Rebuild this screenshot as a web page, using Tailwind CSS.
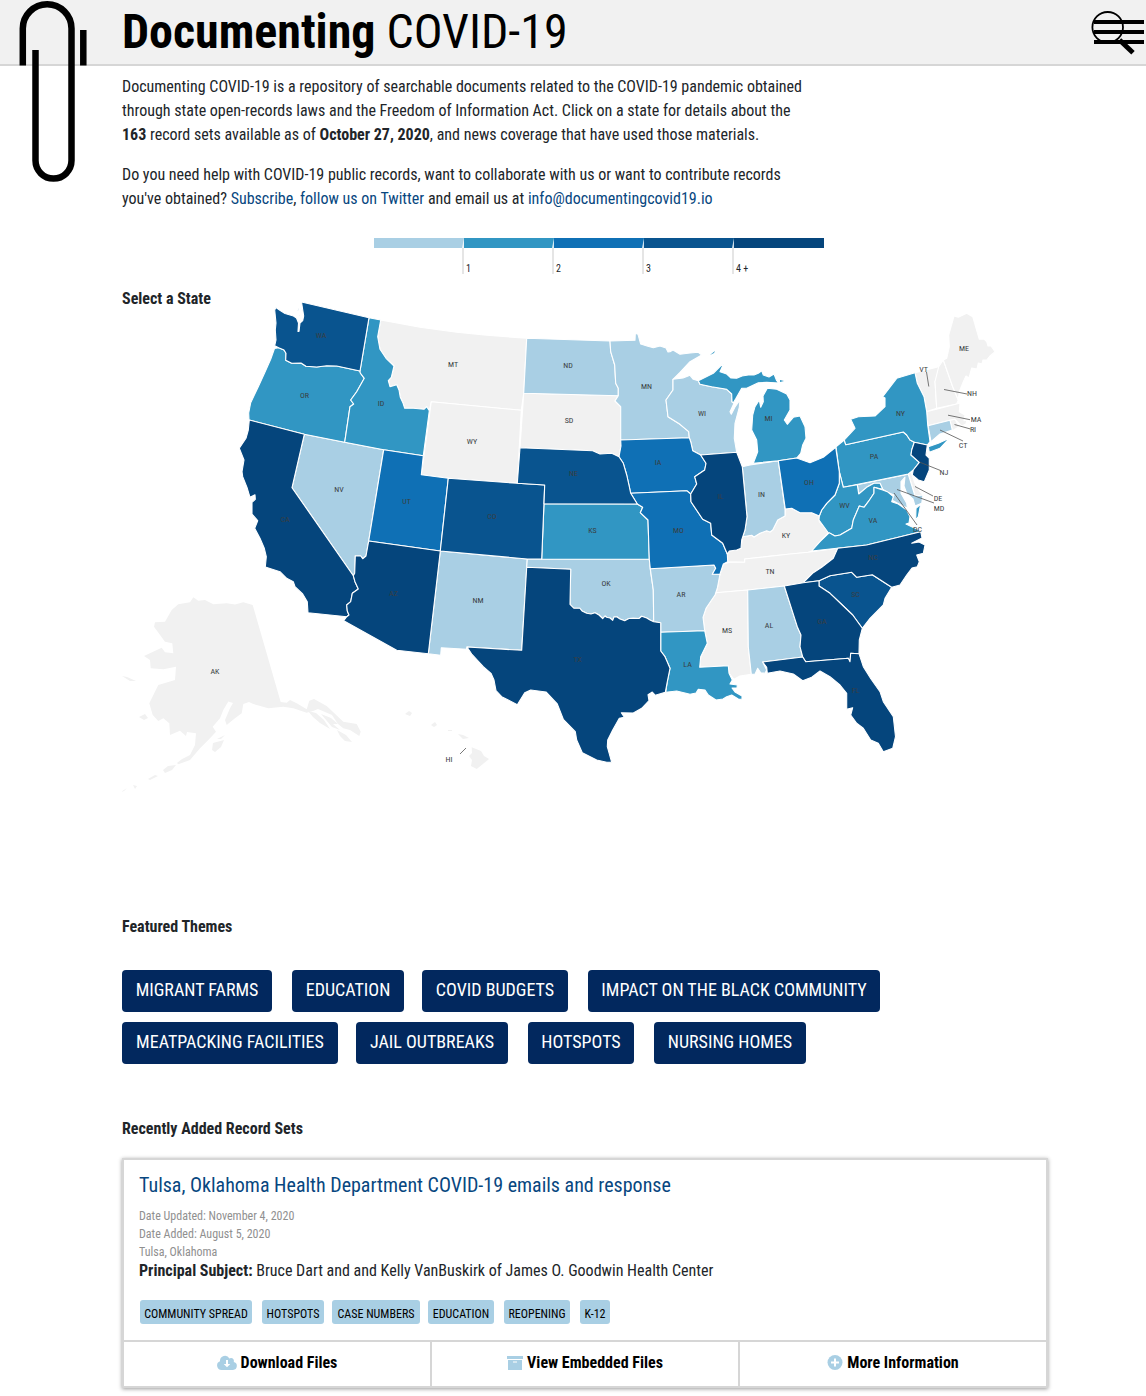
<!DOCTYPE html>
<html lang="en">
<head>
<meta charset="utf-8">
<title>Documenting COVID-19</title>
<script src="https://cdn.jsdelivr.net/npm/@tailwindcss/browser@4"></script>
</head>
<body class="relative h-[1396px] overflow-hidden bg-white font-['Roboto_Condensed',Roboto,sans-serif] [font-stretch:75%] text-base text-[#212529]">
<header class="flex h-[66px] justify-between border-b-2 border-[#d6d6d6] bg-[#f1f1f1] pl-[122px]">
  <h1 class="whitespace-nowrap text-[48px] leading-[64px] text-black"><b>Documenting</b> COVID-19</h1>
  <svg class="h-[60px] w-[60px]" viewBox="1086 0 60 60" fill="none" stroke="#000"><circle cx="1107.7" cy="27.300" r="15.300" stroke-width="1.800"/><path d="M1094 22h50M1094 32h50M1094 42h50" stroke-width="4"/><path d="M1119.500 40l13.500 12.700" stroke-width="5"/></svg>
</header>
<svg class="absolute left-0 top-0 h-[190px] w-[100px]" viewBox="0 0 100 190" fill="none" stroke="#000" stroke-width="6.500"><path d="M22.800 65.500V28.600a24.350 24.350 0 0 1 48.700 0V160.600a18 18 0 0 1-36 0V50M83.300 30V65.500"/></svg>
<main class="ml-[122px] w-[926px]">
  <div class="whitespace-nowrap pt-[9px] leading-6">
    <p>Documenting COVID-19 is a repository of searchable documents related to the COVID-19 pandemic obtained<br>through state open-records laws and the Freedom of Information Act. Click on a state for details about the<br><b>163</b> record sets available as of <b>October 27, 2020</b>, and news coverage that have used those materials.</p>
    <p class="mt-4">Do you need help with COVID-19 public records, want to collaborate with us or want to contribute records<br>you've obtained? <a class="text-[#084780]">Subscribe</a>, <a class="text-[#084780]">follow us on Twitter</a> and email us at <a class="text-[#084780]">info@documentingcovid19.io</a></p>
  </div>
  <div class="ml-[252px] mt-[27px] grid h-[49px] w-[450px] grid-cols-5 text-[10px] leading-3">
    <div><div class="flex h-[10px] justify-end bg-[#a9cfe4]"><i class="w-[2px] bg-white/80 [clip-path:polygon(100%_0,100%_100%,0_100%)]"></i></div></div>
    <div><div class="flex h-[10px] justify-end bg-[#3196c3]"><i class="w-[2px] bg-white/80 [clip-path:polygon(100%_0,100%_100%,0_100%)]"></i></div><div class="-ml-[2px] h-[26px] border-l-2 border-[#e5e5e5] pl-[2px] pt-[15px]">1</div></div>
    <div><div class="flex h-[10px] justify-end bg-[#0f70b5]"><i class="w-[2px] bg-white/80 [clip-path:polygon(100%_0,100%_100%,0_100%)]"></i></div><div class="-ml-[2px] h-[26px] border-l-2 border-[#e5e5e5] pl-[2px] pt-[15px]">2</div></div>
    <div><div class="flex h-[10px] justify-end bg-[#09548f]"><i class="w-[2px] bg-white/80 [clip-path:polygon(100%_0,100%_100%,0_100%)]"></i></div><div class="-ml-[2px] h-[26px] border-l-2 border-[#e5e5e5] pl-[2px] pt-[15px]">3</div></div>
    <div><div class="h-[10px] bg-[#05457c]"></div><div class="-ml-[2px] h-[26px] border-l-2 border-[#e5e5e5] pl-[2px] pt-[15px]">4 +</div></div>
  </div>
  <section class="grid h-[628px]">
    <h2 class="col-start-1 row-start-1 font-bold leading-6">Select a State</h2>
    <svg class="col-start-1 row-start-1 h-[520px] w-[900px]" viewBox="122 287 900 520">
      <g stroke="#fff" stroke-width="1.100" stroke-linejoin="round">
        <g fill="#f1f1f1">
          <path id="MT" d="M380.700 320L420 327.300 456.700 332.300 486.700 335.300 526.700 338.300 523.700 393.300 521.300 410.300 431.300 401.700 429.300 410.700 426.700 406.700 424 409.300 413.300 408.300 404.700 408.300 403 403 400.300 397.300 399 390 396.700 384.700 390 386.700 388.300 380.700 391.300 377.300 394 366 386 358.300 380 349.300 377.700 336.700Z"/>
          <path id="WY" d="M431.300 401.700L521.300 410.300 517.300 483.300 448.300 478.300 421.300 474.700Z"/>
          <path id="SD" d="M523.700 393.300L618.300 395.700 615 401 620.700 406.700 620.700 440 621 446 619 456.700 611.700 453.300 600 454 592.700 450.700 520 447.700Z"/>
          <path id="KY" d="M727.700 561.700L727.300 554 729.300 551 736.700 550 741 548.300 742.700 536.700 751.700 535.300 754 537 760 533.300 766.700 530.700 770 532 772.700 530 777.700 520 785 516 785.300 509 791.700 508.300 800 512.700 811.700 512.700 819.300 516 819.300 521.700 829.300 531.700 820 541.700 811.700 551 808.300 552.300 744.700 559 744.700 562.300Z"/>
          <path id="TN" d="M744.700 559L790 554 808.300 552.300 837.700 548.300 833.300 558.300 821.700 567.300 813.300 572.700 803.300 582.700 784.300 586 747.700 590 716 592.700 717.300 588.300 720 574 723.300 564 730 562.300 744.700 562.300Z"/>
          <path id="MS" d="M716 592.700L747.700 590 748.300 646.700 751.300 674.300 740 676 734 679.300 729 673.300 728.300 665.700 699.700 667.300 700.700 656.700 707.300 643.300 704.700 630.700 703 617.300 706 608.300 715 595Z"/>
          <path id="VT" d="M915 372.700L938.700 366.700 938 374 935 381.700 936.700 408.300 926.700 411.500 924 396.700 917.300 383.300Z"/>
          <path id="NH" d="M938.700 366.700L943.300 360 952.700 386.700 958.300 400 956.700 404 936.700 408.300 935 381.700Z"/>
          <path id="ME" d="M943.300 360L946.700 358.300 949.300 346.700 948.700 335 954 316 958.300 317.300 966.700 313.300 972.700 316.700 979.300 339.300 984 339 986.700 341.700 988 346 991 346 995 351.700 990 356 986.700 360 983 360 982 364 978.300 363 977 369 971.700 368 969 378 966 376 963.300 381.700 959.300 391.700 958.300 400 952.700 386.700Z"/>
          <path id="MA" d="M926.700 411.700L956.700 404 960 403.300 959.300 411.700 965 415 964 420.700 967 420 966 424 961.700 426 955 419.300 950 420.300 928 425.700Z"/>
          <path id="RI" d="M950 420.300L955 419.300 959.300 426.700 952.300 430.700Z"/>
          <path id="DE" d="M908.300 473.300L911 471.700 915 483.300 920 491.700 923.300 495 915 496Z"/>
        </g>
        <g fill="#a9cfe4">
          <path id="NV" d="M304.300 434.300L344.700 442.300 383.700 449.700 368.700 541 366 556 362.700 558.700 360.700 556 355.300 555.700 354.700 573.300 353.300 575.700 292 487.700Z"/>
          <path id="NM" d="M440.300 551L527.300 559 521.700 650.300 467 647 466.300 649.300 441.300 647.700 440.700 655.300 428.300 653.700Z"/>
          <path id="ND" d="M526.700 338.300L610 341 610.700 351.700 614.700 365 615.700 383.300 618.300 388.300 618.300 395.700 523.700 393.300Z"/>
          <path id="OK" d="M527.300 559L541.700 559 649.300 559.300 650.300 569.300 653.300 590 653.700 621.700 650 620 646.700 618 641.700 616.300 639 618.500 633.300 618.300 629 618.500 624.700 620.700 620 619 616.700 616.700 614 617 612.700 620.300 610 618 606.700 617.300 605 616 602.700 618.700 599 615 595 612.700 591 614 586.700 613.300 582 611 580 608.300 574 608.300 570 604.300 570.700 569.300 526.700 567.300Z"/>
          <path id="MN" d="M610 341L635 340.300 635.300 333.300 638 334.300 640.700 344 647 346 653.300 347.700 660 346 666 348 668 352 670 351.700 673 350 680 354.300 690 353 698.300 352.300 701.700 355 690 361.700 680 372.300 673 379.300 673 390 666 400 668 416.700 680 424.300 688.700 431.700 689.300 437.700 620.700 440 620.700 406.700 615 401 618.300 395.700 618.300 388.300 615.700 383.300 614.700 365 610.700 351.700Z"/>
          <path id="WI" d="M673 379.300L683 378 690 375.300 693.300 379.300 698.300 380.700 700 384.300 711.700 386.700 726.700 389.300 731.700 394 732 401.700 734 403.300 730 411.700 731.300 414.300 735 407 740 400 739.300 407.300 735 423.300 734.300 438.300 736.700 452.300 700.700 455 692.700 450.700 690.700 441.700 689.300 437.700 688.700 431.700 680 424.300 668 416.700 666 400 673 390Z"/>
          <path id="AR" d="M650.300 568.700L714 565 715.700 568.300 712.300 574.300 720 574 717.300 588.300 715 595 706 608.300 703 617.300 704.700 630.700 660.700 632.300 660.700 622.700 653.700 621.700 653.300 590Z"/>
          <path id="AL" d="M747.700 590L784.300 586 797.300 626.700 801 635 800 646.700 802.700 657 762.700 662 766.700 670 765 673.300 760.700 672.700 757.700 668.300 755 674.300 751.300 674.300 748.300 646.700Z"/>
          <path id="IN" d="M742.300 466.700L750 465 778.300 460.700 785 509 785 516 777.700 520 772.700 530 770 532 766.700 530.700 760 533.300 754 537 751.700 535.300 742.700 536.700 745 530 747 516.700Z"/>
          <path id="CT" d="M928 425.700L950 420.300 952.300 430 940 434 931 441.700Z"/>
          <path id="MD" d="M857.300 484.700L908.300 474.300 915 496 923 495 921.700 503.300 915 506 913 499 906.700 493.300 904 486 905 477 901 481.700 901 493.300 906.700 503.300 907.300 508.300 896.700 502.700 891.700 500 894 495 887 492 882.700 489.300 880 483.300 874 483.300 866.700 487.300 858.700 494Z"/>
        </g>
        <g fill="#3196c3">
          <path id="OR" d="M274.500 348.500L278.700 347.700 284 350 286 353.300 285.700 360.300 291.700 363.300 301 363 306 366.300 316.700 367 326.700 365.700 336.700 366 360 371 360.300 373 364.300 378.300 356.700 391.700 350.700 400 353.700 404 350 406.700 344.700 442.300 304.300 434.300 249 420 248.700 413 250.700 402.700 258.300 386.700 264.700 372.700 270.700 359.300Z"/>
          <path id="ID" d="M369 317.700L380.700 320 377.700 336.700 380 349.300 386 358.300 394 366 391.300 377.300 388.300 380.700 390 386.700 396.700 384.700 399 390 400.300 397.300 403 403 404.700 408.300 413.300 408.300 424 409.300 426.700 406.700 429.300 410.700 423.300 455.700 383.700 449.700 344.700 442.300 350 406.700 353.700 404 350.700 400 356.700 391.700 364.300 378.300 360.300 373 360 371Z"/>
          <path id="KS" d="M544 503.700L637.300 504 642.700 507.300 640.300 512.700 648 520 649.300 559.300 541.700 559Z"/>
          <path id="LA" d="M660.700 632.300L704.700 630.700 707.300 643.300 700.700 656.700 699.700 667.300 728.300 665.700 729 673.300 732.300 680 730 684 737.300 685 737 688 732 688 735 692 742 696 742 699.300 738.300 699 731.700 695 726.700 696.700 723 699 716 700 708.300 695 705 690 698.300 689.300 696 693 690 694.300 676.700 691 665.700 692.300 667.300 681.700 670 668.300 665 656.700 660.700 651Z"/>
          <path id="MI" d="M753.300 463.300L757.700 451.700 756.700 440 751.700 430 752.700 415 755 406.700 759.300 400 760.700 407.300 763.300 401.700 763 396 767.300 388.300 776.700 389.300 786.700 394 790 400 790 410 784.300 420 787.300 424.300 793.300 417.300 800 416 805 426.700 806 438.300 802.700 445 800.700 453.300 796.700 458 778.300 460.700ZM698.300 380.700L713.300 373.300 724 362.700 720 371.700 726.700 374 731 378 736.700 378.300 742 376 748.300 375 754 375 758.300 373.300 761.700 370.700 763.300 375 769 377 774 374 776.700 380.700 779 383 766.700 382.300 758.300 382.700 746.700 388.300 741.700 388.300 736 398.300 733.300 402.700 732 401.700 731.700 394 726.700 389.300 711.700 386.700 700 384.300Z"/>
          <path stroke="none" d="M710 355L715 351 714 353ZM780 380L784 381 780 382Z"/>
          <path id="PA" d="M836 446.700L844.300 440 845.700 444.700 903.300 432 906.700 435 910 440 914.300 442.300 911.700 450 911 455 919.300 462.300 913.300 470 908.300 474 843.300 487.300 839.300 471.700Z"/>
          <path id="WV" d="M839.300 471.700L843.300 487.300 857.300 484.700 858.700 494 866.700 487.300 874 483.300 880 483.300 882.700 489.300 874 487.300 874 493.300 868.300 501.700 864 507.300 859.300 506 853.300 520 851.700 528.300 840 535 835 536 828.300 532.700 819 520 819.300 516 821.700 510 826.700 503.300 835 495 839.300 483.300Z"/>
          <path id="VA" d="M811.700 551L820 541.700 829.300 532.700 835 536 840 535 851.700 528.300 853.300 520 859.300 506 864 507.300 868.300 501.700 874 493.300 874 487.300 882.700 490 887.300 491.700 893.300 496.700 891.700 501.700 898.300 504 906.700 510 910 516.700 909 523 906 524 911.700 526.700 919.300 530 920.700 531.700 866.700 545ZM916 508.300L920.700 504 918.300 516.700 915.700 520Z"/>
          <path id="NY" d="M844.300 440L855 428.300 850.700 419.300 858.300 416.700 875 416 885 406.700 885 398 882.700 396.700 896.700 378.300 915 372.700 917.300 383.300 924 396.700 926.700 411.700 927.700 425 930 441.700 927.300 445 914.300 442.300 910 440 906.700 435 903.300 432 845.700 444.700ZM928.300 446.700L938.300 443.300 949.300 438.300 940 448.300 929.300 452.300Z"/>
        </g>
        <g fill="#0f70b5">
          <path id="UT" d="M383.700 449.700L423.300 455.700 421.300 474.700 448.300 478.300 440.300 551 368.700 541Z"/>
          <path id="IA" d="M620.700 440L689.300 437.700 690.700 441.700 692.700 450.700 700.700 455 706 463.300 704.700 470 694.700 476.700 696.700 484 690.700 494 686.700 490.700 630.700 493.300 629.300 486.700 626.700 475 623.300 463.300 619 456.700 621 446Z"/>
          <path id="MO" d="M630.700 493.300L686.700 490.700 690.700 494 691 501.700 702.700 519.300 710.700 523.300 711.700 535 722.700 543.300 727.300 554 727.700 561.700 723.300 564 720 574 712.300 574.300 715.700 568.300 714 565 650.300 568.700 649.300 559.300 648 520 640.300 512.700 642.700 507.300 637.300 504Z"/>
          <path id="OH" d="M778.300 460.700L796.700 458 810 462.700 823.300 457.300 835.700 447.300 839.300 471.700 839.300 483.300 835 495 826.700 503.300 821.700 510 819.300 516 811.700 512.700 800 512.700 791.700 508.300 785.300 509Z"/>
        </g>
        <g fill="#09548f">
          <path id="WA" d="M276 307.500L279.500 310 285 313.500 293.500 316 296.500 318 298.500 323 298 331.500 299 331.500 300 323 302.700 320.700 303.700 316 301.500 302 369 317.700 360 371 336.700 366 326.700 365.700 316.700 367 306 366.300 301 363 291.700 363.300 285.700 360.300 286 353.300 284 350 278.700 347.700 274.700 345.700 276 340 275.300 330 276 323 274.700 310ZM297 308l2 1-1 2ZM299 313l1 1-1 2Z"/>
          <path id="CO" d="M448.300 478.300L517.300 483.300 544.700 485 541.700 559 527.300 559 440.300 551Z"/>
          <path id="NE" d="M520 447.700L592.700 450.700 600 454 611.700 453.300 619 456.700 623.300 463.300 626.700 475 629.300 486.700 630.700 493.300 637.300 504 544 503.700 544.700 485 517.300 483.300Z"/>
          <path id="SC" d="M819 580.700L830 575.700 851.700 572.300 856.700 577.300 872.300 574.700 891.700 587.300 885 598.300 883.300 605 870 618.300 862.300 628.300 852.700 615 843.300 606 830 593.300 819 586Z"/>
        </g>
        <g fill="#05457c">
          <path id="CA" d="M249.300 420L304.300 434.300 292 487.700 353.300 575.700 355 581.700 358.300 589 352.300 593.300 350.700 601.700 346.700 605 347.300 611 349 615 346.700 616.700 308 612.700 307.300 601.700 302.700 594 295 586.700 293.300 581.700 286.700 578.300 280 571.700 265.300 567 266.300 556.700 264.300 548.300 260 538.300 254.700 528.300 257.700 520.700 252 514 252 502.300 255.300 499.300 255 494.700 250 497.300 247.300 488.300 242.700 476.700 242 471.700 244 460 239.300 448.300 246 438.300 248.300 430Z"/>
          <path id="AZ" d="M368.700 541L440.300 551 428.300 653.700 396.700 650.300 343.700 620.700 346.700 616.700 349 615 347.300 611 346.700 605 350.700 601.700 352.300 593.300 358.300 589 355 581.700 353.300 575.700 354.700 573.300 355.300 555.700 360.700 556 362.700 558.700 366 556Z"/>
          <path id="TX" d="M526.700 567.300L570.700 569.300 570 604.300 574 608.300 580 608.300 582 611 586.700 613.300 591 614 595 612.700 599 615 602.700 618.700 605 616 606.700 617.300 610 618 612.700 620.300 614 617 616.700 616.700 620 619 624.700 620.700 629 618.500 633.300 618.300 639 618.500 641.700 616.300 646.700 618 650 620 653.700 621.700 660.700 622.700 660.700 651 665 656.700 670 668.300 667.300 681.700 665.300 692.300 655.300 695.300 652.300 692 648 694.700 649 700.700 641.700 708.300 633.300 713 621.300 712.700 624.300 717.300 619.300 718.300 612.700 730 607.700 740 607.300 746.700 611.700 762.300 606.700 762.300 596.700 760 582.300 752.700 576.700 740 575.300 731.700 563.300 719.300 557.300 704 546 692 530.700 690 524.700 692.700 517.300 704.700 501.700 696.700 496 690.700 494 680 491 673.300 483.300 666.700 471.700 654 467 647 521.700 650.300Z"/>
          <path id="IL" d="M700.700 455L736.700 452.300 742.300 466.700 747 516.700 745 530 741.700 540 741 548.300 736.700 550 729.300 551 727.300 554 722.700 543.300 711.700 535 710.700 523.300 702.700 519.300 691 501.700 690.700 494 696.700 484 694.700 476.700 704.700 470 706 463.300Z"/>
          <path id="NJ" d="M914.300 442.300L927.300 445 926 455 929.300 458.300 929.300 470 924.300 481.700 918.300 480 912.300 475 913.300 470 919.300 462.300 911 455 911.700 450Z"/>
          <path id="NC" d="M837.700 548.300L866.700 545 920.700 531.700 922 538 911.700 543.300 919 542 925 545 923.300 553.300 916.700 555 919.300 561.700 917.300 566.700 912 568 906.700 575 900 585 891.700 587.300 872.300 574.700 856.700 577.300 851.700 572.300 830 575.700 819 580.700 803.300 582.700 813.300 572.700 821.700 567.300 833.300 558.300Z"/>
          <path id="GA" d="M784.300 586L803.300 582.700 819 580.700 819 586 830 593.300 843.300 606 852.700 615 862.300 628.300 859.300 640 859 653.700 850.700 653.300 850 661.700 848.300 658.300 805.700 661.700 802.700 657 800 646.700 801 635 797.300 626.700Z"/>
          <path id="FL" d="M762.700 662L802.700 657 805.700 661.700 848.300 658.300 850 661.700 850.700 653.300 859 653.700 863.300 666.700 871 679 880 691.700 883.300 701.700 893.300 716.700 895.500 736.700 892.700 748.300 883.300 751.700 878.300 743.300 870.700 740 863.300 728.300 856.700 723.300 850.700 715 852.700 707.700 846.700 709.300 846.700 693.300 840 685 830 676.700 820 671 811.700 677.300 802.700 680.700 793.300 674 780 671 767.300 673.300 766.700 667.300Z"/>
        </g>
      </g>
      <g fill="#f1f1f1">
        <path id="AK" d="M193.300 597.300L198.300 600.700 205 600 213.300 604.300 226.700 603.300 235 604.500 243.300 602.300 252.700 605 280.700 702 286.700 702.700 290 700 296.700 703.300 306.700 709.300 309.300 700.700 314 699 326.700 706 343.300 721.700 356.700 724 360.700 731.700 359.300 736 350 730 343.300 728.300 338 724 332 715 318 709 313 711 306.700 712.700 293.300 708.300 283.300 706.700 268.300 708.300 253.300 704 249 702 243.300 704 241.700 713.300 234 719 226.700 725 225 720 230 708.300 233 703 228.300 701.500 223.300 710 220 718.300 212.700 726.700 216 731.700 210 738.300 200 748.300 190 760 178.300 764.300 177 763 181.700 759.300 190 755 195 745 196 733.300 187 732 186 736 180 730.700 170 735 169.300 723.300 163.300 718.300 158.300 721 152.700 715 149.300 703.300 158.300 685 175 680 176 666.700 163.300 669.300 150.700 668.300 150 660 144 656 161.700 647.700 165 652.300 173.300 653.300 172.300 643.300 165 641.700 154 626.700 155 622.300 165 621.700 171.700 610 178.300 604.300 190 602.300Z"/>
        <path d="M308 711L316 713 324 720 330 729 320 723 313 717ZM321 714L331 718 338 724 333 724 340 730 332 727ZM337 730L346 735 352 742 345 741 340 736ZM122 676L127 677 136 681 130 681ZM139 717L145 714 148 718 144 720ZM213 743L224 740 221 747 215 752 212 750ZM217 739L225 735 221 739ZM163 770L168 766 176 765 172 770 165 773ZM148 779L155 775 158 776 150 780ZM121 792L127 788 124 791ZM133 785L137 786 135 789Z"/>
        <path id="HI" d="M471.700 747.300L481 751 484 756 489 759 476.700 769 471 766 472 760 469 756 472 753ZM405 714L409 711 412 713 410 716ZM431 725L435 722 437 725 434 727ZM448 730h4v1h-4ZM458 734L463 735 469 738 463 739Z"/>
      </g>
      <path stroke="#555" stroke-width=".800" fill="none" d="M460 754l6-6M926.500 372l2.300 14.500M944 389.500l23 4.500M948 415.200l22 4.500M954.500 424.500l16 4.500M940 430l23 11M920 462.300l20 8M915 486.500l18 9.500M897 489.500l37 13.500M894 493l23 32"/>
      <g fill="#3a3e42" class="text-[8px]" text-anchor="middle" transform="translate(0 -.3)">
        <text x="321" y="338">WA</text><text x="304.500" y="398">OR</text><text x="381" y="406">ID</text><text x="453" y="367">MT</text><text x="472" y="444">WY</text><text x="568" y="368">ND</text><text x="569" y="423">SD</text><text x="573.500" y="476">NE</text><text x="646.500" y="389">MN</text><text x="702" y="416">WI</text><text x="768.500" y="421">MI</text><text x="658" y="465">IA</text><text x="720.500" y="499">IL</text><text x="761.500" y="497">IN</text><text x="809" y="485">OH</text><text x="339" y="492">NV</text><text x="406.500" y="504">UT</text><text x="285" y="522">CA</text><text x="492" y="519">CO</text><text x="592.500" y="533">KS</text><text x="678.500" y="533">MO</text><text x="393.500" y="596">AZ</text><text x="478" y="603">NM</text><text x="606" y="586">OK</text><text x="681" y="597">AR</text><text x="577.500" y="662">TX</text><text x="687.500" y="667">LA</text><text x="727" y="633">MS</text><text x="769" y="628">AL</text><text x="822" y="624">GA</text><text x="855.500" y="693">FL</text><text x="855.500" y="597">SC</text><text x="873" y="560">NC</text><text x="770" y="574">TN</text><text x="786" y="538">KY</text><text x="844.500" y="508">WV</text><text x="873" y="523">VA</text><text x="874" y="459">PA</text><text x="900.500" y="416">NY</text><text x="964" y="351">ME</text><text x="923.500" y="372">VT</text><text x="972" y="396">NH</text><text x="976" y="422">MA</text><text x="973" y="432">RI</text><text x="963" y="448">CT</text><text x="944" y="475">NJ</text><text x="938" y="501">DE</text><text x="939" y="511">MD</text><text x="917.500" y="532">DC</text><text x="215" y="674">AK</text><text x="449" y="762">HI</text>
      </g>
    </svg>
  </section>
  <h2 class="font-bold leading-6">Featured Themes</h2>
  <div class="mt-[31px] grid gap-y-[10px] whitespace-nowrap text-center text-[18px] leading-[40px] text-white">
    <div class="flex">
      <a class="mr-5 h-[42px] w-[150px] rounded bg-[#02285e]">MIGRANT FARMS</a><a class="mr-[18px] h-[42px] w-[112px] rounded bg-[#02285e]">EDUCATION</a><a class="mr-5 h-[42px] w-[146px] rounded bg-[#02285e]">COVID BUDGETS</a><a class="h-[42px] w-[292px] rounded bg-[#02285e]">IMPACT ON THE BLACK COMMUNITY</a>
    </div>
    <div class="flex">
      <a class="mr-[18px] h-[42px] w-[216px] rounded bg-[#02285e]">MEATPACKING FACILITIES</a><a class="mr-5 h-[42px] w-[152px] rounded bg-[#02285e]">JAIL OUTBREAKS</a><a class="mr-5 h-[42px] w-[106px] rounded bg-[#02285e]">HOTSPOTS</a><a class="h-[42px] w-[152px] rounded bg-[#02285e]">NURSING HOMES</a>
    </div>
  </div>
  <h2 class="mt-[53px] font-bold leading-6">Recently Added Record Sets</h2>
  <article class="mt-[17px] h-[230px] w-[926px] whitespace-nowrap border-2 border-[#d6d6d6] shadow-[0_1px_4px_rgba(0,0,0,0.4)]">
    <div class="h-[180px] px-[15px] pt-[10px]">
      <h3 class="text-[20px] leading-[30px] text-[#084780]">Tulsa, Oklahoma Health Department COVID-19 emails and response</h3>
      <div class="mt-[7px] text-xs leading-[18px] text-[#909090]">Date Updated: November 4, 2020<br>Date Added: August 5, 2020<br>Tulsa, Oklahoma</div>
      <p class="-mt-[2px] leading-6"><b>Principal Subject:</b> Bruce Dart and and Kelly VanBuskirk of James O. Goodwin Health Center</p>
      <div class="ml-px mt-[17px] flex text-center text-xs leading-[28px] text-black">
        <span class="mr-[10px] h-6 w-[112px] rounded-[3px] bg-[#a9cfe4]">COMMUNITY SPREAD</span><span class="mr-2 h-6 w-[62px] rounded-[3px] bg-[#a9cfe4]">HOTSPOTS</span><span class="mr-2 h-6 w-[88px] rounded-[3px] bg-[#a9cfe4]">CASE NUMBERS</span><span class="mr-[10px] h-6 w-[66px] rounded-[3px] bg-[#a9cfe4]">EDUCATION</span><span class="mr-[10px] h-6 w-[66px] rounded-[3px] bg-[#a9cfe4]">REOPENING</span><span class="h-6 w-[30px] rounded-[3px] bg-[#a9cfe4]">K-12</span>
      </div>
    </div>
    <div class="grid h-[46px] grid-cols-[308px_308px_306px] border-t-2 border-[#d6d6d6] font-bold text-black">
      <a class="flex items-center justify-center gap-1 border-r-2 border-[#d6d6d6] pb-[2px]"><svg class="h-4 w-5" viewBox="0 0 20 16"><path fill="#a9cfe4" d="M16.700 7.100A3 3 0 0 0 14 3a3 3 0 0 0-1.600.500A5 5 0 0 0 3 6v.300A4.500 4.500 0 0 0 4.500 15H16a4 4 0 0 0 .700-7.900z"/><path fill="#fff" d="M9 5h2v4h2.300L10 12.300 6.700 9H9z"/></svg>Download Files</a>
      <a class="flex items-center justify-center gap-1 border-r-2 border-[#d6d6d6] pb-[2px]"><svg class="h-4 w-4" viewBox="0 0 16 16"><path fill="#a9cfe4" d="M0 1h16v3H0zM1 5h14v10H1z"/><path fill="#fff" d="M6 6.500h4v1H6z"/></svg>View Embedded Files</a>
      <a class="flex items-center justify-center gap-1 pb-[2px]"><svg class="h-4 w-4" viewBox="0 0 16 16"><circle cx="8" cy="7.500" r="7.500" fill="#a9cfe4"/><path stroke="#fff" stroke-width="2" d="M8 3.500v8M4 7.500h8"/></svg>More Information</a>
    </div>
  </article>
</main>
</body>
</html>
